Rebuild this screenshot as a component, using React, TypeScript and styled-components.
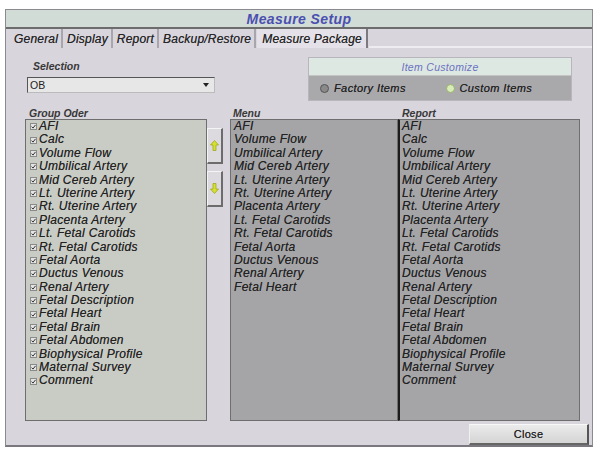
import React from "react";
import styled, { createGlobalStyle } from "styled-components";

const Global = createGlobalStyle`
  html, body { margin: 0; padding: 0; background: #ffffff; }
  body { font-family: "Liberation Sans", Arial, sans-serif; }
`;

const Page = styled.div`
  padding: 9px 0 0 5px;
  width: 598px;
  height: 451px;
  box-sizing: border-box;
`;

const Window = styled.div`
  width: 588px;
  height: 438px;
  box-sizing: border-box;
  border: 1px solid #8c8a90;
  border-bottom: 2px solid #7a787e;
  background: #d8d5dd;
  display: flex;
  flex-direction: column;
`;

const TitleBar = styled.div`
  height: 17px;
  background: #d2dcd7;
  border-bottom: 2px solid #6c6c6c;
  display: flex;
  align-items: center;
  justify-content: center;
  font-size: 14px;
  letter-spacing: 0.4px;
  font-weight: bold;
  font-style: italic;
  color: #4a4fb0;
`;

const TabRow = styled.div`
  height: 19px;
  display: flex;
  align-items: stretch;
  background: #d8d5dd;
  padding-left: 5px;
`;

const Tab = styled.div<{ $active?: boolean }>`
  padding: 0 ${(p) => (p.$active ? "4px 0 5px" : "3px")};
  display: flex;
  align-items: center;
  font-size: 12px;
  letter-spacing: 0.2px;
  font-style: italic;
  color: #262626;
  background: ${(p) => (p.$active ? "#e4e2e8" : "#d8d5dd")};
  border-right: 2px solid ${(p) => (p.$active ? "#7c7a80" : "#a8a6ac")};
  margin-right: 1px;
  text-shadow: 0 0 0.5px rgba(0, 0, 0, 0.6);
`;

const TabFill = styled.div`
  flex: 1;
  border-bottom: 2px solid #eeecf0;
`;

const Content = styled.div`
  flex: 1;
  display: flex;
  flex-direction: column;
  padding: 9px 4px 0 19px;
`;

const TopRow = styled.div`
  display: flex;
  justify-content: space-between;
  height: 44px;
`;

const SelectionBlock = styled.div`
  display: flex;
  flex-direction: column;
  padding-top: 4px;
  padding-left: 2px;
`;

const Label = styled.div<{ $indent?: number }>`
  font-size: 10.5px;
  font-style: italic;
  font-weight: bold;
  color: #383838;
  padding-left: ${(p) => p.$indent ?? 0}px;
  height: 11px;
  line-height: 11px;
`;

const SelectBox = styled.div`
  margin-top: 5px;
  width: 188px;
  height: 16px;
  box-sizing: border-box;
  background: #e7e7e7;
  border: 1px solid #555;
  border-right-color: #bbb;
  border-bottom-color: #bbb;
  display: flex;
  align-items: center;
  justify-content: space-between;
  padding: 0 5px 0 2px;
  font-size: 10.5px;
  color: #222;
`;

const Customize = styled.div`
  margin-right: 16px;
  width: 262px;
  display: flex;
  flex-direction: column;
  border: 1px solid #b8b6bc;
`;

const CustomizeHead = styled.div`
  height: 17px;
  background: #dee8e3;
  border-bottom: 1px solid #c4c4c4;
  display: flex;
  align-items: center;
  justify-content: center;
  font-size: 10.5px;
  letter-spacing: 0.3px;
  font-style: italic;
  color: #6a72c0;
`;

const CustomizeBody = styled.div`
  flex: 1;
  background: #a9a8ab;
  display: flex;
  align-items: center;
  padding-left: 11px;
`;

const RadioItem = styled.div`
  display: flex;
  align-items: center;
  gap: 5px;
  font-size: 11px;
  letter-spacing: 0.4px;
  font-style: italic;
  color: #222;
  text-shadow: 0 0 0.5px rgba(0, 0, 0, 0.6);
  width: 126px;
`;

const Radio = styled.span<{ $on?: boolean }>`
  width: 9px;
  height: 9px;
  border-radius: 50%;
  box-sizing: border-box;
  background: ${(p) => (p.$on ? "#d8ecb8" : "#8a8a8a")};
  border: 1px solid ${(p) => (p.$on ? "#9ab070" : "#555")};
`;

const ListsArea = styled.div`
  display: flex;
  margin-top: 7px;
`;

const Column = styled.div`
  display: flex;
  flex-direction: column;
`;

const ListBox = styled.div<{ $bg: string; $w: number; $leftDark?: boolean; $pad: number }>`
  width: ${(p) => p.$w}px;
  height: 302px;
  box-sizing: border-box;
  background: ${(p) => p.$bg};
  border: 1px solid #6e6e6e;
  border-left: ${(p) => (p.$leftDark ? "2px solid #1c1c1c" : "1px solid #6e6e6e")};
  padding: 0 0 0 ${(p) => p.$pad}px;
  display: flex;
  flex-direction: column;
`;

const Item = styled.div`
  height: 13.4px;
  line-height: 13.4px;
  font-size: 12px;
  letter-spacing: 0.3px;
  font-style: italic;
  color: #222;
  white-space: nowrap;
  text-shadow: 0 0 0.5px rgba(0, 0, 0, 0.55);
  display: flex;
  align-items: center;
  gap: 2px;
`;

const Check = styled.span`
  width: 5px;
  height: 5px;
  display: inline-flex;
  align-items: center;
  justify-content: center;
  background: #e4e4e4;
  border: 1px solid #8a8a8a;
  box-sizing: content-box;
`;

const ButtonsCol = styled.div`
  display: flex;
  flex-direction: column;
  padding-top: 2px;
  gap: 7px;
  width: 23px;
`;

const ArrowButton = styled.div`
  width: 16px;
  height: 36px;
  box-sizing: border-box;
  background: #dcdade;
  border-top: 1px solid #f4f4f4;
  border-left: 1px solid #f4f4f4;
  border-right: 2px solid #6c6c6c;
  border-bottom: 2px solid #6c6c6c;
  display: flex;
  align-items: center;
  justify-content: center;
`;

const BottomRow = styled.div`
  display: flex;
  justify-content: flex-end;
  padding-top: 3px;
`;

const CloseButton = styled.div`
  width: 120px;
  height: 21px;
  box-sizing: border-box;
  background: linear-gradient(#ebebeb, #d4d4d4);
  border-top: 1px solid #f8f8f8;
  border-left: 1px solid #f0f0f0;
  border-right: 2px solid #555;
  border-bottom: 2px solid #666;
  display: flex;
  align-items: center;
  justify-content: center;
  font-size: 11px;
  letter-spacing: 0.3px;
  color: #222;
  text-shadow: 0 0 0.5px rgba(0, 0, 0, 0.6);
  margin-right: -1px;
`;

const groupItems = [
  "AFI", "Calc", "Volume Flow", "Umbilical Artery", "Mid Cereb Artery",
  "Lt. Uterine Artery", "Rt. Uterine Artery", "Placenta Artery",
  "Lt. Fetal Carotids", "Rt. Fetal Carotids", "Fetal Aorta", "Ductus Venous",
  "Renal Artery", "Fetal Description", "Fetal Heart", "Fetal Brain",
  "Fetal Abdomen", "Biophysical Profile", "Maternal Survey", "Comment",
];

const menuItems = [
  "AFI", "Volume Flow", "Umbilical Artery", "Mid Cereb Artery",
  "Lt. Uterine Artery", "Rt. Uterine Artery", "Placenta Artery",
  "Lt. Fetal Carotids", "Rt. Fetal Carotids", "Fetal Aorta", "Ductus Venous",
  "Renal Artery", "Fetal Heart",
];

const CheckIcon = () => (
  <Check>
    <svg width="5" height="5" viewBox="0 0 5 5">
      <path d="M0.6 2.6 L2 4.1 L4.5 0.9" stroke="#333" strokeWidth="1" fill="none" />
    </svg>
  </Check>
);

const Arrow = ({ down }: { down?: boolean }) => (
  <svg width="9" height="11" viewBox="0 0 9 11" style={down ? { transform: "rotate(180deg)" } : undefined}>
    <path d="M4.5 0.5 L8.5 5 L6 5 L6 10.5 L3 10.5 L3 5 L0.5 5 Z" fill="#d6e030" stroke="#9aa010" strokeWidth="0.7" />
  </svg>
);

export default function App() {
  return (
    <Page>
      <Global />
      <Window>
        <TitleBar>Measure Setup</TitleBar>
        <TabRow>
          <Tab>General</Tab>
          <Tab>Display</Tab>
          <Tab>Report</Tab>
          <Tab>Backup/Restore</Tab>
          <Tab $active>Measure Package</Tab>
          <TabFill />
        </TabRow>
        <Content>
          <TopRow>
            <SelectionBlock>
              <Label $indent={6}>Selection</Label>
              <SelectBox>
                <span>OB</span>
                <svg width="6" height="4" viewBox="0 0 6 4">
                  <path d="M0 0 L6 0 L3 4 Z" fill="#222" />
                </svg>
              </SelectBox>
            </SelectionBlock>
            <Customize>
              <CustomizeHead>Item Customize</CustomizeHead>
              <CustomizeBody>
                <RadioItem><Radio />Factory Items</RadioItem>
                <RadioItem><Radio $on />Custom Items</RadioItem>
              </CustomizeBody>
            </Customize>
          </TopRow>
          <ListsArea>
            <Column>
              <Label $indent={4}>Group Oder</Label>
              <ListBox $bg="#c9cbc5" $w={182} $pad={4}>
                {groupItems.map((t) => (
                  <Item key={t}><CheckIcon />{t}</Item>
                ))}
              </ListBox>
            </Column>
            <ButtonsCol>
              <Label />
              <ArrowButton><Arrow /></ArrowButton>
              <ArrowButton><Arrow down /></ArrowButton>
            </ButtonsCol>
            <Column>
              <Label $indent={3}>Menu</Label>
              <ListBox $bg="#a5a5a7" $w={168} $pad={3}>
                {menuItems.map((t) => (
                  <Item key={t}>{t}</Item>
                ))}
              </ListBox>
            </Column>
            <Column>
              <Label $indent={4}>Report</Label>
              <ListBox $bg="#a5a5a7" $w={182} $leftDark $pad={2}>
                {groupItems.map((t) => (
                  <Item key={t}>{t}</Item>
                ))}
              </ListBox>
            </Column>
          </ListsArea>
          <BottomRow>
            <CloseButton>Close</CloseButton>
          </BottomRow>
        </Content>
      </Window>
    </Page>
  );
}
